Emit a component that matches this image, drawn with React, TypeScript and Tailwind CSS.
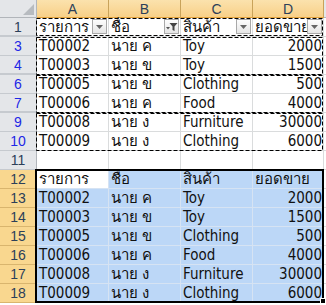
import React from 'react'

type Row = {
  n: number
  cells: string[]
  kind: 'filter' | 'data' | 'empty' | 'selHead' | 'selData'
}

const data = [
  ['T00002', 'นาย ค', 'Toy', '2000'],
  ['T00003', 'นาย ข', 'Toy', '1500'],
  ['T00005', 'นาย ข', 'Clothing', '500'],
  ['T00006', 'นาย ค', 'Food', '4000'],
  ['T00008', 'นาย ง', 'Furniture', '30000'],
  ['T00009', 'นาย ง', 'Clothing', '6000'],
]
const heads = ['รายการ', 'ชื่อ', 'สินค้า', 'ยอดขาย']

const rows: Row[] = [
  { n: 1, cells: heads, kind: 'filter' },
  { n: 3, cells: data[0], kind: 'data' },
  { n: 4, cells: data[1], kind: 'data' },
  { n: 6, cells: data[2], kind: 'data' },
  { n: 7, cells: data[3], kind: 'data' },
  { n: 9, cells: data[4], kind: 'data' },
  { n: 10, cells: data[5], kind: 'data' },
  { n: 11, cells: ['', '', '', ''], kind: 'empty' },
  { n: 12, cells: heads, kind: 'selHead' },
  ...data.map((d, i) => ({ n: 13 + i, cells: d, kind: 'selData' as const })),
]

const colW = ['w-[72px]', 'w-[72px]', 'w-[72px]', 'w-[71px]']
const cellFont = "font-['Tahoma','DejaVu_Sans_Condensed','DejaVu_Sans',sans-serif] text-[15px] leading-[16px] text-[#111]"

function DropButton({ filtered }: { filtered?: boolean }) {
  return (
    <span className="absolute bottom-[2px] right-[1px] flex h-[15px] w-[15px] items-center justify-center border border-[#a9a9a9] bg-gradient-to-b from-[#fdfdfd] to-[#e6e6e6]">
      {filtered ? (
        <svg width="13" height="11" viewBox="0 0 13 11">
          <path d="M1 6h4l-2 2.5z" fill="#555" />
          <path d="M4.5 2h8l-3 3.5v4.5l-2-1v-3.5z" fill="#444" />
        </svg>
      ) : (
        <svg width="7" height="4" viewBox="0 0 7 4">
          <path d="M0 0h7l-3.5 4z" fill="#666" />
        </svg>
      )}
    </span>
  )
}

export default function App() {
  return (
    <div className="relative h-[305px] w-[326px] overflow-hidden bg-white select-none">
      {/* column headers */}
      <div className="flex h-[18px]">
        <div className="relative w-[37px] shrink-0 border-b border-r border-[#b1b5ba] bg-[#e4e6e9]">
          <svg className="absolute bottom-[2px] right-[2px]" width="11" height="11" viewBox="0 0 11 11">
            <path d="M11 0v11H0z" fill="#b7bbc0" />
          </svg>
        </div>
        {['A', 'B', 'C', 'D'].map((c, i) => (
          <div
            key={c}
            className={`${colW[i]} flex shrink-0 items-center justify-center border-b border-r border-[#c9a35a] border-b-[#e3a33d] bg-gradient-to-b from-[#fbe2ad] to-[#f8d088] font-['Liberation_Sans',sans-serif] text-[14px] leading-[16px] text-[#2c3f59]`}
          >
            {c}
          </div>
        ))}
        <div className="flex-1 border-b border-[#b1b5ba] bg-[#e4e6e9]" />
      </div>

      {rows.map((r) => {
        const sel = r.kind === 'selHead' || r.kind === 'selData'
        const blue = r.kind === 'data'
        const gapAfter = r.n === 1 || r.n === 4 || r.n === 7
        return (
          <div key={r.n} className="flex h-[19px]">
            <div
              className={`flex w-[37px] shrink-0 items-center justify-center border-r font-['Liberation_Sans',sans-serif] text-[14px] leading-[16px] ${
                sel
                  ? 'border-b border-[#e3a33d] border-b-[#d9b56e] bg-[#f9d78f] text-[#2c3f59]'
                  : `border-[#b1b5ba] bg-[#e4e6e9] ${gapAfter ? 'border-b-2 border-b-[#c6cacf]' : 'border-b border-b-[#c6cacf]'} ${
                      blue ? 'text-[#1d27e6]' : 'text-[#2c3f59]'
                    }`
              }`}
            >
              {r.n}
            </div>
            {r.cells.map((t, i) => {
              const white = r.kind === 'selHead' && i === 0
              const bg = sel && !white ? 'bg-[#bcd7f7]' : 'bg-white'
              const right = i === 3 && /^\d+$/.test(t)
              return (
                <div
                  key={i}
                  className={`${colW[i]} relative flex shrink-0 items-end whitespace-nowrap border-b border-r pb-[1px] ${
                    sel ? 'border-[#d6e3f3]' : 'border-[#dadcdd]'
                  } ${bg} ${cellFont} ${right ? 'justify-end pr-[1px]' : 'pl-[2px]'}`}
                >
                  <span>{t}</span>
                  {r.kind === 'filter' && <DropButton filtered={i === 1} />}
                </div>
              )
            })}
            <div className="flex-1 border-b border-[#dadcdd]" />
          </div>
        )
      })}

      {/* copy marquee over the filtered range */}
      <svg className="pointer-events-none absolute left-0 top-0" width="326" height="305">
        <g fill="none" stroke="#000" strokeWidth="1" strokeDasharray="4 2">
          <rect x="36.5" y="18.5" width="286" height="17" />
          <rect x="36.5" y="37.5" width="286" height="37" />
          <rect x="36.5" y="75.5" width="286" height="37" />
          <rect x="36.5" y="113.5" width="286" height="37" />
        </g>
      </svg>

      {/* selection border A12:D18 */}
      <div className="pointer-events-none absolute left-[35px] top-[169px] h-[134px] w-[289px] border-2 border-black" />
      <div className="pointer-events-none absolute left-[320px] top-[298px] h-[6px] w-[6px] border border-white bg-black" />
    </div>
  )
}
